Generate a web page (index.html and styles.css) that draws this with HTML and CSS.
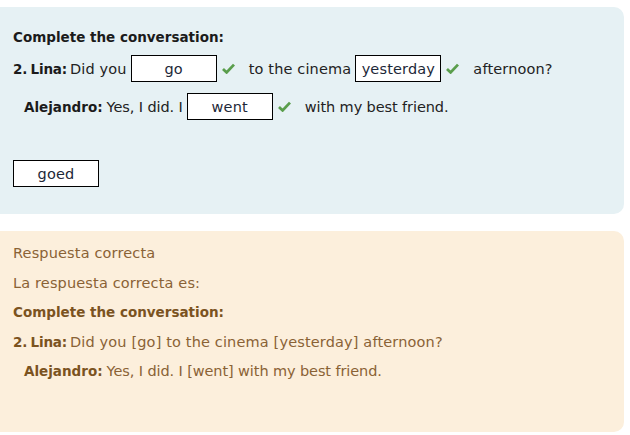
FILE: index.html
```html
<!DOCTYPE html>
<html>
<head>
<meta charset="utf-8">
<link rel="stylesheet" href="styles.css">
</head>
<body>
<div class="page">
  <section class="card question">
    <p class="title">Complete the conversation:</p>
    <div class="row">
      <span class="speaker lina">2. Lina:</span>
      <span class="txt">Did you</span>
      <span class="blank">go</span>
      <svg class="check" viewBox="0 0 13 11"><path d="M1 6 L4.6 9.4 L12 1.6" fill="none" stroke="#5a9e4c" stroke-width="2.8"/></svg>
      <span class="txt gap">to the cinema</span>
      <span class="blank">yesterday</span>
      <svg class="check" viewBox="0 0 13 11"><path d="M1 6 L4.6 9.4 L12 1.6" fill="none" stroke="#5a9e4c" stroke-width="2.8"/></svg>
      <span class="txt gap">afternoon?</span>
    </div>
    <div class="row indent second">
      <span class="speaker short">Alejandro:</span>
      <span class="txt tight">Yes, I did. I</span>
      <span class="blank">went</span>
      <svg class="check" viewBox="0 0 13 11"><path d="M1 6 L4.6 9.4 L12 1.6" fill="none" stroke="#5a9e4c" stroke-width="2.8"/></svg>
      <span class="txt gap tight">with my best friend.</span>
    </div>
    <div class="extra"><span class="blank">goed</span></div>
  </section>
  <section class="card feedback">
    <p class="line">Respuesta correcta</p>
    <p class="line">La respuesta correcta es:</p>
    <p class="line strong">Complete the conversation:</p>
    <p class="line"><span class="fb-speaker lina">2. Lina:</span>Did you [go] to the cinema [yesterday] afternoon?</p>
    <p class="line indent tight"><span class="fb-speaker short">Alejandro:</span>Yes, I did. I [went] with my best friend.</p>
  </section>
</div>
</body>
</html>
```
FILE: styles.css
```css
* { box-sizing: border-box; }
html, body { margin: 0; padding: 0; background: #ffffff; }
body {
  font-family: "DejaVu Sans", "Open Sans", sans-serif;
  font-size: 14.5px;
  letter-spacing: 0.15px;
  color: #222222;
}
.page {
  padding-top: 7px;
  width: 630px;
}
.card {
  width: 624px;
  border-radius: 0 10px 10px 0;
  padding-left: 13px;
}
.question {
  background: #e6f1f4;
  height: 207px;
  padding-top: 20px;
}
.title {
  margin: 0;
  line-height: 20px;
  font-weight: 700;
  font-size: 13.5px;
  letter-spacing: 0;
  color: #1b1b1b;
}
.row {
  display: flex;
  align-items: center;
  margin-top: 8px;
  height: 27px;
}
.row.second {
  margin-top: 11px;
}
.indent { padding-left: 11px; }
.speaker {
  font-weight: 700;
  font-size: 13.5px;
  letter-spacing: 0;
  color: #1b1b1b;
  margin-right: 4px;
}
.speaker.lina, .fb-speaker.lina { word-spacing: -1px; letter-spacing: -0.2px; margin-right: 3px; }
.speaker.short { margin-right: 4px; }
.txt { white-space: nowrap; }
.tight { letter-spacing: -0.1px; }
.txt.gap { margin-left: 14px; }
.blank {
  display: inline-flex;
  align-items: center;
  justify-content: center;
  width: 86px;
  height: 27px;
  margin-left: 4px;
  border: 1px solid #000000;
  background: #ffffff;
  color: #1d2838;
}
.check {
  width: 13px;
  height: 11px;
  margin-left: 5px;
}
.extra {
  margin-top: 40px;
  display: flex;
}
.extra .blank { margin-left: 0; }
.feedback {
  margin-top: 17px;
  background: #fcefdc;
  height: 201px;
  padding-top: 8px;
  color: #8a6235;
}
.line {
  margin: 0;
  line-height: 29.5px;
  white-space: nowrap;
}
.strong { font-weight: 700; font-size: 13.5px; letter-spacing: 0; color: #7b531f; }
.fb-speaker { font-weight: 700; font-size: 13.5px; letter-spacing: 0; color: #7b531f; margin-right: 4px; }
.fb-speaker.short { margin-right: 4px; }
```
